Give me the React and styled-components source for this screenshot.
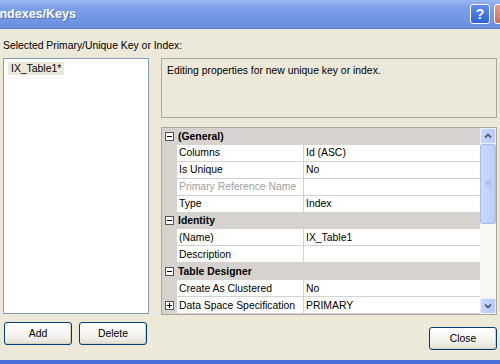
import styled, { createGlobalStyle } from 'styled-components';

const GlobalStyle = createGlobalStyle`
	html, body {
		margin: 0;
		padding: 0;
	}
	body {
		font-family: Tahoma, "Liberation Sans", Arial, sans-serif;
		font-size: 10.4px;
		color: #000;
	}
`;

const Window = styled.div`
	width: 500px;
	height: 364px;
	display: flex;
	flex-direction: column;
	overflow: hidden;
	background: #ece9d8;
	border-bottom: 4px solid #4a6fd8;
	box-sizing: border-box;
`;

const TitleBar = styled.div`
	height: 29px;
	flex-shrink: 0;
	display: flex;
	align-items: center;
	justify-content: space-between;
	background: linear-gradient(to bottom, #9bb6f2 0%, #7c9fe8 30%, #7096e4 70%, #6b8fe0 100%);
	border-bottom: 1px solid #5a7ed6;
	box-sizing: border-box;
`;

const Title = styled.span`
	margin-left: -4px;
	color: #fff;
	font-weight: 700;
	font-size: 12.5px;
	text-shadow: 1px 1px 0 #5570c0;
`;

const TitleButtons = styled.div`
	display: flex;
	gap: 4px;
	margin-right: -14px;
`;

const CaptionButton = styled.div`
	width: 18px;
	height: 18px;
	border: 1px solid #fff;
	border-radius: 3px;
	display: flex;
	align-items: center;
	justify-content: center;
	color: #fff;
	font-weight: 700;
	font-size: 14px;
	background: ${(p) =>
		p.$danger
			? 'linear-gradient(to bottom, #e49a8a, #cf6f5e)'
			: 'linear-gradient(to bottom, #5f8ef0, #2f62d8)'};
`;

const Body = styled.div`
	flex: 1;
	display: flex;
	flex-direction: column;
	padding: 10px 3px 0 3px;
`;

const Label = styled.div`
	height: 14px;
	line-height: 14px;
	margin-bottom: 5px;
`;

const Main = styled.div`
	display: flex;
	gap: 12px;
`;

const LeftColumn = styled.div`
	width: 146px;
	display: flex;
	flex-direction: column;
`;

const RightColumn = styled.div`
	flex: 1;
	display: flex;
	flex-direction: column;
`;

const ListBox = styled.div`
	height: 256px;
	background: #fff;
	border: 1px solid #7f9db9;
	box-sizing: border-box;
	padding: 3px 4px;
`;

const ListItem = styled.div`
	display: inline-block;
	padding: 0 3px;
	line-height: 13px;
	background: ${(p) => (p.$selected ? '#ece9d8' : 'transparent')};
`;

const ButtonRow = styled.div`
	display: flex;
	justify-content: ${(p) => p.$align || 'flex-start'};
	gap: 7px;
	margin-top: ${(p) => p.$top || 8}px;
	padding-left: ${(p) => p.$left || 0}px;
`;

const Button = styled.button`
	width: 68px;
	height: 23px;
	font-family: inherit;
	font-size: 10.4px;
	color: #000;
	border: 1px solid #003c74;
	border-radius: 3px;
	background: linear-gradient(to bottom, #ffffff 0%, #f4f3ee 60%, #e3e0d3 100%);
	box-shadow: inset -1px -1px 0 #d6d0c0;
	padding: 0;
`;

const Description = styled.div`
	height: 60px;
	border: 1px solid #aca899;
	box-sizing: border-box;
	padding: 5px 5px;
	line-height: 14px;
`;

const Grid = styled.div`
	margin-top: 9px;
	height: 188px;
	display: flex;
	border: 1px solid #aca899;
	box-sizing: border-box;
	background: #fff;
`;

const Rows = styled.div`
	flex: 1;
	display: flex;
	flex-direction: column;
`;

const Row = styled.div`
	height: 17px;
	display: flex;
	align-items: stretch;
	background: #d6d3ce;
`;

const Gutter = styled.div`
	width: 15px;
	flex-shrink: 0;
	display: flex;
	align-items: center;
	justify-content: center;
`;

const ToggleBox = styled.div`
	width: 7px;
	height: 7px;
	border: 1px solid #555;
	background: #fff;
	position: relative;
	&::before {
		content: '';
		position: absolute;
		left: 1px;
		right: 1px;
		top: 3px;
		height: 1px;
		background: #000;
	}
	&::after {
		content: '';
		position: absolute;
		top: 1px;
		bottom: 1px;
		left: 3px;
		width: 1px;
		background: #000;
		display: ${(p) => (p.$collapsed ? 'block' : 'none')};
	}
`;

const CategoryName = styled.div`
	flex: 1;
	display: flex;
	align-items: center;
	font-weight: 700;
	padding-left: 1px;
`;

const Cell = styled.div`
	display: flex;
	align-items: center;
	background: #fff;
	border-bottom: 1px solid #d6d3ce;
	box-sizing: border-box;
	white-space: nowrap;
	overflow: hidden;
	padding-left: 2px;
	color: ${(p) => (p.$disabled ? '#a0a0a0' : '#000')};
`;

const NameCell = styled(Cell)`
	width: 127px;
	flex-shrink: 0;
	border-right: 1px solid #d6d3ce;
`;

const ValueCell = styled(Cell)`
	flex: 1;
`;

const ScrollBar = styled.div`
	width: 16px;
	flex-shrink: 0;
	display: flex;
	flex-direction: column;
	background: #f7f7f3;
`;

const ScrollArrow = styled.div`
	height: 16px;
	display: flex;
	align-items: center;
	justify-content: center;
	background: linear-gradient(to right, #c8d8fc, #b8cbf6);
	border: 1px solid #e6eefe;
	box-sizing: border-box;
	border-radius: 2px;
`;

const ScrollThumb = styled.div`
	height: 80px;
	background: linear-gradient(to right, #cbdaff, #b9cdf8);
	border: 1px solid #a6bdf0;
	box-sizing: border-box;
	border-radius: 2px;
	display: flex;
	align-items: center;
	justify-content: center;
`;

const Grip = styled.div`
	width: 6px;
	height: 6px;
	background: repeating-linear-gradient(to bottom, #9fb6e8 0 1px, transparent 1px 2px);
`;

const ScrollTrack = styled.div`
	flex: 1;
`;

const Chevron = ({ down }) => (
	<svg width="8" height="6" viewBox="0 0 8 6">
		<path
			d={down ? 'M1 1.5 L4 4.5 L7 1.5' : 'M1 4.5 L4 1.5 L7 4.5'}
			fill="none"
			stroke="#4d6185"
			strokeWidth="1.8"
		/>
	</svg>
);

const rows = [
	{ category: '(General)' },
	{ name: 'Columns', value: 'Id (ASC)' },
	{ name: 'Is Unique', value: 'No' },
	{ name: 'Primary Reference Name', value: '', disabled: true },
	{ name: 'Type', value: 'Index' },
	{ category: 'Identity' },
	{ name: '(Name)', value: 'IX_Table1' },
	{ name: 'Description', value: '' },
	{ category: 'Table Designer' },
	{ name: 'Create As Clustered', value: 'No' },
	{ name: 'Data Space Specification', value: 'PRIMARY', expandable: true },
];

function App() {
	return (
		<>
			<GlobalStyle />
			<Window>
				<TitleBar>
					<Title>Indexes/Keys</Title>
					<TitleButtons>
						<CaptionButton>?</CaptionButton>
						<CaptionButton $danger>✕</CaptionButton>
					</TitleButtons>
				</TitleBar>
				<Body>
					<Label>Selected Primary/Unique Key or Index:</Label>
					<Main>
						<LeftColumn>
							<ListBox>
								<ListItem $selected>IX_Table1*</ListItem>
							</ListBox>
							<ButtonRow $left={1}>
								<Button>Add</Button>
								<Button>Delete</Button>
							</ButtonRow>
						</LeftColumn>
						<RightColumn>
							<Description>Editing properties for new unique key or index.</Description>
							<Grid>
								<Rows>
									{rows.map((r, i) =>
										r.category ? (
											<Row key={i}>
												<Gutter>
													<ToggleBox />
												</Gutter>
												<CategoryName>{r.category}</CategoryName>
											</Row>
										) : (
											<Row key={i}>
												<Gutter>{r.expandable && <ToggleBox $collapsed />}</Gutter>
												<NameCell $disabled={r.disabled}>{r.name}</NameCell>
												<ValueCell>{r.value}</ValueCell>
											</Row>
										)
									)}
								</Rows>
								<ScrollBar>
									<ScrollArrow>
										<Chevron />
									</ScrollArrow>
									<ScrollThumb>
										<Grip />
									</ScrollThumb>
									<ScrollTrack />
									<ScrollArrow>
										<Chevron down />
									</ScrollArrow>
								</ScrollBar>
							</Grid>
							<ButtonRow $align="flex-end" $top={12}>
								<Button>Close</Button>
							</ButtonRow>
						</RightColumn>
					</Main>
				</Body>
			</Window>
		</>
	);
}

export default App;
